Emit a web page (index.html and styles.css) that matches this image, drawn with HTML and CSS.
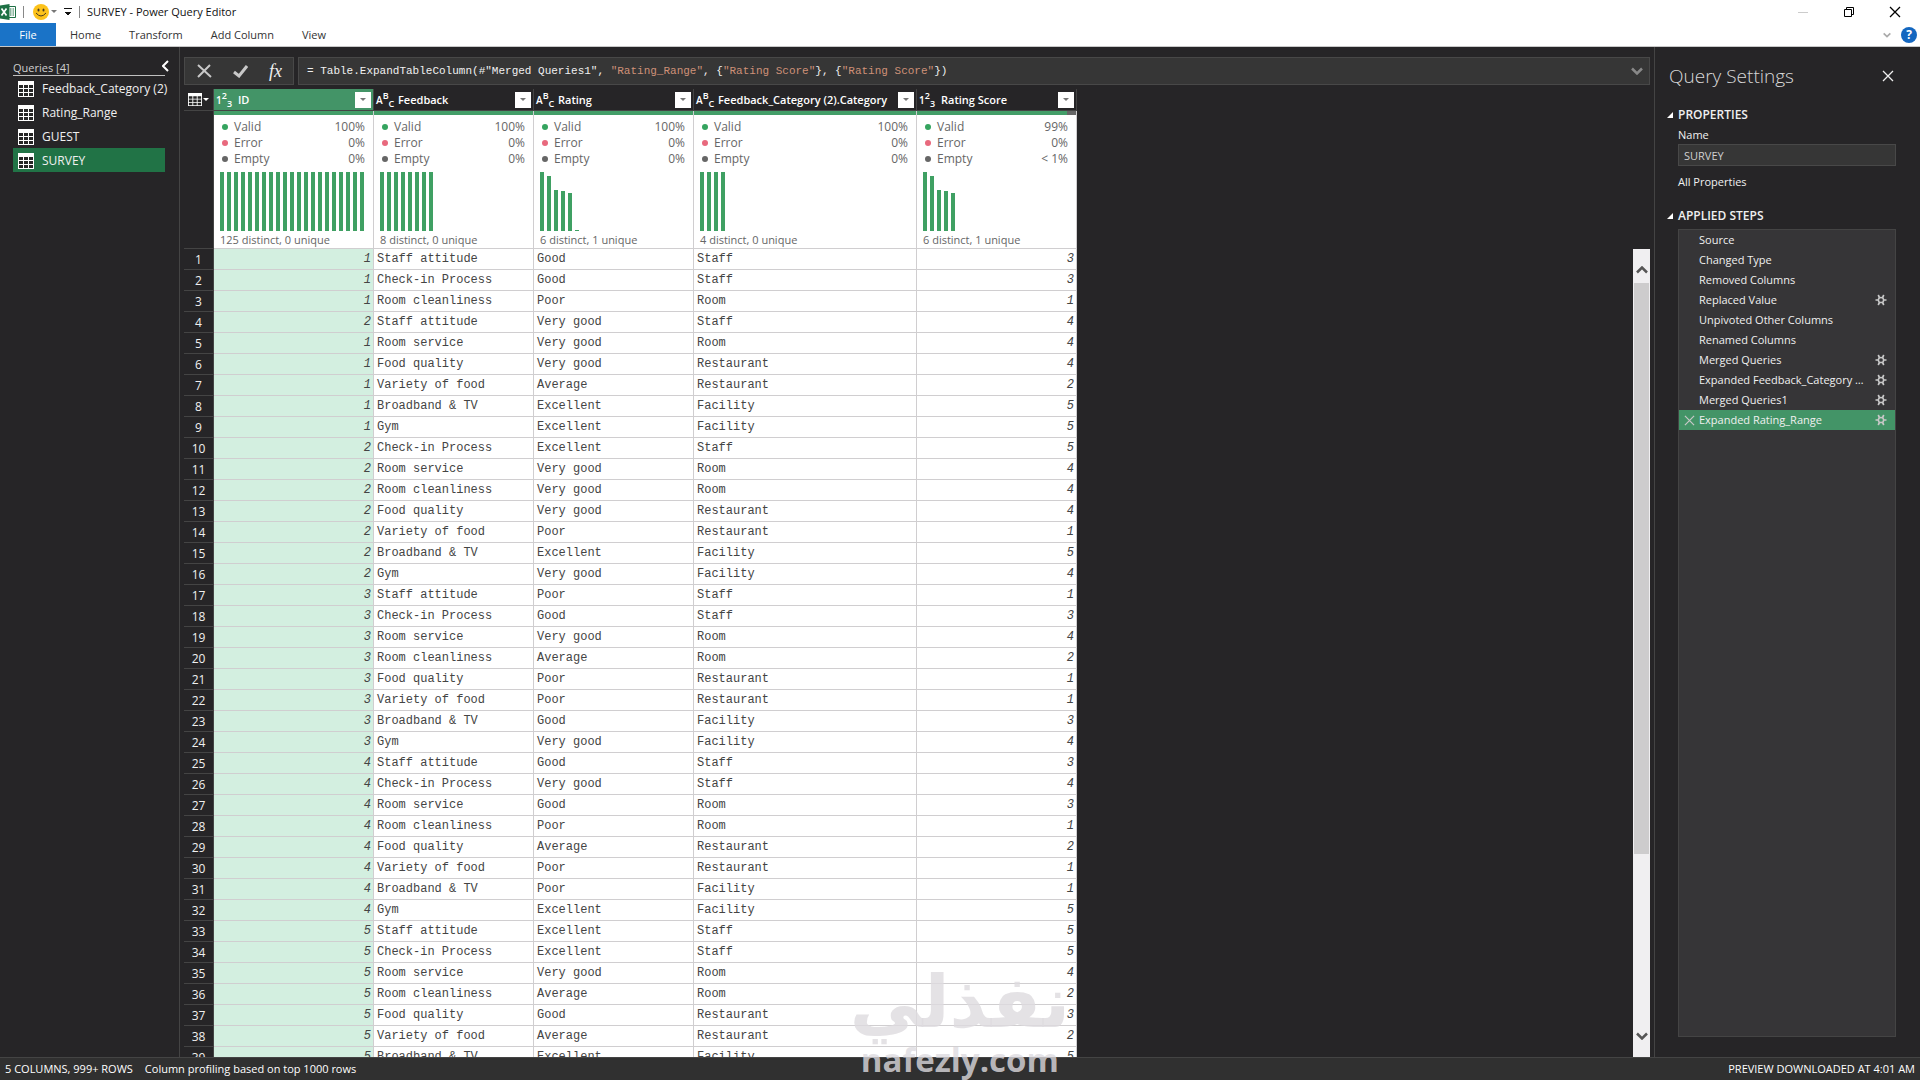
FILE: index.html
```html
<!DOCTYPE html>
<html lang="en">
<head>
    <meta charset="UTF-8">
    <meta name="viewport" content="width=device-width, initial-scale=1.0">
    <title>SURVEY - Power Query Editor</title>
    <link rel="stylesheet" href="styles.css">
</head>
<body>
    <svg class="sprite" width="0" height="0" aria-hidden="true">
        <symbol id="table" viewBox="0 0 16 16">
            <path fill="#fff" d="M0 0h16v16H0z"/>
            <path fill="#262626" d="M1 4h4v3H1zM6 4h4v3H6zM11 4h4v3h-4zM1 8h4v3H1zM6 8h4v3H6zM11 8h4v3h-4zM1 12h4v3H1zM6 12h4v3H6zM11 12h4v3h-4z"/>
        </symbol>
        <symbol id="gear" viewBox="0 0 12 12">
            <circle cx="6" cy="6" r="2.600" fill="none" stroke="currentColor" stroke-width="1.500"/>
            <path stroke="currentColor" stroke-width="1.700" fill="none" d="M.5 6h2.500M9 6h2.500M3.200 1l1.300 2.600M8.800 1L7.500 3.600M3.200 11l1.300-2.600M8.800 11L7.500 8.400"/>
        </symbol>
        <symbol id="cross" viewBox="0 0 12 12">
            <path stroke="currentColor" stroke-width="1.300" fill="none" d="M1 1l10 10M11 1L1 11"/>
        </symbol>
        <symbol id="chevron" viewBox="0 0 12 8">
            <path stroke="currentColor" stroke-width="2.500" fill="none" d="M1 1.500l5 5 5-5"/>
        </symbol>
    </svg>

    <header class="titlebar">
        <svg class="excel" width="16" height="16" viewBox="0 0 16 16">
            <path fill="#fff" stroke="#1e7145" d="M8 2.500h7.500v11H8z"/>
            <path stroke="#1e7145" d="M10 5h4M10 7h4M10 9h4M10 11h4" stroke-dasharray="1.500 1"/>
            <path fill="#1e7145" d="M0 1.500L9.500 0v16L0 14.500z"/>
            <path stroke="#fff" stroke-width="1.700" d="M1.500 4.500l5 7M6.500 4.500l-5 7"/>
        </svg>
        <span class="divider"></span>
        <svg class="smiley" width="16" height="16" viewBox="0 0 16 16">
            <circle cx="8" cy="8" r="8" fill="#fcc21b"/>
            <ellipse cx="5.500" cy="6" rx="1" ry="1.500" fill="#4a3a20"/>
            <ellipse cx="10.500" cy="6" rx="1" ry="1.500" fill="#4a3a20"/>
            <path d="M3 9q5 6 10 0" fill="none" stroke="#4a3a20"/>
        </svg>
        <span class="caret"></span>
        <span class="customize"></span>
        <span class="divider"></span>
        <h1>SURVEY - Power Query Editor</h1>
        <div class="window-buttons">
            <button aria-label="Minimize"><svg width="10" height="10"><path stroke="#ccc" d="M0 5.500h10"/></svg></button>
            <button aria-label="Restore"><svg width="10" height="10" fill="none" stroke="#000"><path d="M.5 2.500h7v7h-7zM2.500 2.500v-2h7v7h-2"/></svg></button>
            <button aria-label="Close"><svg width="12" height="12"><use href="#cross"/></svg></button>
        </div>
    </header>

    <nav class="ribbon">
        <a class="file" href="#">File</a>
        <a href="#">Home</a>
        <a href="#">Transform</a>
        <a href="#">Add Column</a>
        <a href="#">View</a>
        <div class="ribbon-end">
            <button class="collapse-ribbon" aria-label="Collapse the ribbon"><svg width="8" height="6"><use href="#chevron"/></svg></button>
            <button class="help" aria-label="Help">?</button>
        </div>
    </nav>

    <div class="workspace">
        <aside class="queries">
            <div class="queries-head">
                <h2>Queries [4]</h2>
                <button aria-label="Collapse"><svg width="7" height="12" viewBox="0 0 7 12"><path d="M6 1L1 6l5 5" fill="none" stroke="#fff" stroke-width="2"/></svg></button>
            </div>
            <ul>
                <li><a href="#"><svg width="16" height="16"><use href="#table"/></svg>Feedback_Category (2)</a></li>
                <li><a href="#"><svg width="16" height="16"><use href="#table"/></svg>Rating_Range</a></li>
                <li><a href="#"><svg width="16" height="16"><use href="#table"/></svg>GUEST</a></li>
                <li><a class="selected" href="#"><svg width="16" height="16"><use href="#table"/></svg>SURVEY</a></li>
            </ul>
        </aside>

        <main class="editor">
            <div class="formula-bar">
                <div class="formula-buttons">
                    <button aria-label="Cancel"><svg width="15" height="14" viewBox="0 0 15 14"><path d="M1 1l13 12M13 1L1 13" fill="none" stroke="#c8c8c8" stroke-width="2"/></svg></button>
                    <button aria-label="Commit"><svg width="15" height="13" viewBox="0 0 15 13"><path d="M1 7l5 4 8-10" fill="none" stroke="#c8c8c8" stroke-width="3"/></svg></button>
                    <button class="fx" aria-label="Insert step">fx</button>
                </div>
                <div class="formula">
                    <code>= Table.ExpandTableColumn(#"Merged Queries1", <span>"Rating_Range"</span>, {<span>"Rating Score"</span>}, {<span>"Rating Score"</span>})</code>
                    <button aria-label="Expand formula bar"><svg width="12" height="8"><use href="#chevron"/></svg></button>
                </div>
            </div>
            <div class="preview">
                <table>
                    <colgroup>
                        <col class="col-num"><col class="col-std"><col class="col-std"><col class="col-std"><col class="col-wide"><col class="col-std">
                    </colgroup>
                    <thead>
                        <tr id="columnNames">
                            <th class="corner"><button aria-label="Table menu"><svg width="14" height="13" viewBox="0 0 16 16" preserveAspectRatio="none"><use href="#table"/></svg><span class="caret"></span></button></th>
                        </tr>
                        <tr id="columnProfiles"><td class="num"></td></tr>
                    </thead>
                    <tbody id="rows"></tbody>
                </table>
                <div class="scrollbar">
                    <button aria-label="Scroll up"><svg class="flip" width="12" height="8"><use href="#chevron"/></svg></button>
                    <div class="track"><div class="thumb"></div></div>
                    <button aria-label="Scroll down"><svg width="12" height="8"><use href="#chevron"/></svg></button>
                </div>
            </div>
        </main>

        <aside class="settings">
            <div class="settings-head">
                <h2>Query Settings</h2>
                <button aria-label="Close pane"><svg width="12" height="12"><use href="#cross"/></svg></button>
            </div>
            <h3>PROPERTIES</h3>
            <div class="properties">
                <label for="queryName">Name</label>
                <input type="text" id="queryName" value="SURVEY">
                <a href="#">All Properties</a>
            </div>
            <h3>APPLIED STEPS</h3>
            <ol class="steps" id="steps"></ol>
        </aside>
    </div>

    <footer class="statusbar">
        <span>5 COLUMNS, 999+ ROWS</span>
        <span>Column profiling based on top 1000 rows</span>
        <span class="downloaded">PREVIEW DOWNLOADED AT 4:01 AM</span>
    </footer>

    <div class="watermark">
        <span class="watermark-ar" lang="ar" dir="rtl">نفذلي</span>
        <span class="watermark-en">nafezly.com</span>
    </div>

    <script src="script.js"></script>
</body>
</html>
```
FILE: styles.css
```css
* {
    box-sizing: border-box;
}

body {
    display: flex;
    flex-direction: column;
    height: 100vh;
    margin: 0;
    overflow: hidden;
    background-color: #262527;
    color: #f0f0f0;
    font-family: "Open Sans", "Noto Sans", sans-serif;
    font-size: 12px;
    line-height: 16px;
}

h1, h2, h3, ul, ol {
    margin: 0;
    padding: 0;
    font-size: 12px;
    font-weight: 400;
    list-style: none;
}

a {
    color: inherit;
    text-decoration: none;
}

button {
    display: flex;
    align-items: center;
    justify-content: center;
    padding: 0;
    border: none;
    background: none;
    color: inherit;
    font: inherit;
    cursor: pointer;
}

svg {
    display: block;
    flex: none;
}

.sprite {
    position: absolute;
}

.caret {
    border: 3px solid transparent;
    border-top-color: currentColor;
    border-bottom: none;
}

/* Title bar */
.titlebar {
    display: flex;
    flex: none;
    align-items: center;
    height: 23px;
    background-color: #fff;
    color: #111;
}

.titlebar h1 {
    font-size: 11px;
}

.titlebar .divider {
    width: 1px;
    height: 12px;
    margin: 0 7px;
    background-color: #888;
}

.smiley {
    margin-left: 2px;
}

.titlebar .caret {
    margin: 0 7px 0 2px;
    color: #777;
}

.customize {
    width: 8px;
    height: 8px;
    border-top: 1px solid #111;
    background: conic-gradient(from -45deg at 50% 90%, #111 90deg, transparent 0) 0 3px / 8px 4px no-repeat;
}

.window-buttons {
    display: flex;
    margin-left: auto;
    margin-right: 2px;
}

.window-buttons button {
    width: 46px;
    height: 20px;
    color: #000;
}

/* Ribbon tabs */
.ribbon {
    display: flex;
    flex: none;
    align-items: center;
    height: 24px;
    border-bottom: 1px solid #c8c8c8;
    background-color: #fff;
    color: #333;
    font-size: 11px;
}

.ribbon a {
    margin-right: 28px;
    line-height: 23px;
}

.ribbon .file {
    width: 56px;
    margin-right: 14px;
    background-color: #1a73c7;
    color: #fff;
    text-align: center;
}

.ribbon-end {
    display: flex;
    gap: 10px;
    margin-left: auto;
    margin-right: 3px;
}

.collapse-ribbon {
    color: #aaa;
}

.help {
    width: 16px;
    height: 16px;
    border-radius: 50%;
    background-color: #1467c0;
    color: #fff;
    font-size: 12px;
    font-weight: 700;
}

.workspace {
    display: flex;
    flex: 1;
    min-height: 0;
}

/* Queries pane */
.queries {
    flex: none;
    width: 180px;
    padding: 12px 14px 0 13px;
    border-right: 1px solid #444;
}

.queries-head {
    display: flex;
    justify-content: space-between;
    height: 17px;
    border-bottom: 1px solid #c0c0c0;
}

.queries-head h2 {
    color: #d0d0d0;
    font-size: 11px;
    line-height: 18px;
}

.queries-head button {
    width: 0;
    height: 14px;
}

.queries li a {
    display: flex;
    align-items: center;
    gap: 8px;
    height: 24px;
    padding: 1px 0 0 5px;
    white-space: nowrap;
}

.queries li .selected {
    background-color: #217346;
}

/* Formula bar and preview */
.editor {
    display: flex;
    flex: 1;
    flex-direction: column;
    min-width: 0;
    padding: 10px 4px 0;
}

.formula-bar {
    display: flex;
    flex: none;
    gap: 4px;
    height: 28px;
    margin-bottom: 4px;
}

.formula-buttons,
.formula {
    display: flex;
    align-items: center;
    border: 1px solid #484848;
    background-color: #363636;
}

.formula-buttons {
    width: 110px;
    justify-content: space-between;
    padding: 0 11px 0 12px;
}

.fx {
    font-family: "Liberation Serif", serif;
    font-size: 18px;
    font-style: italic;
}

.formula {
    flex: 1;
    justify-content: space-between;
    padding: 0 6px 0 8px;
}

.formula code {
    font-family: "Liberation Mono", monospace;
    font-size: 11px;
    white-space: pre;
}

.formula code span {
    color: #ce9178;
}

.formula button {
    color: #888;
}

.preview {
    display: flex;
    flex: 1;
    align-items: flex-start;
    justify-content: space-between;
    min-height: 0;
    overflow: hidden;
}

table {
    flex: none;
    width: 893px;
    border-spacing: 0;
    table-layout: fixed;
    background-color: #fff;
    color: #444;
}

.col-num {
    width: 30px;
}

.col-std {
    width: 160px;
}

.col-wide {
    width: 223px;
}

th,
td {
    height: 21px;
    padding: 0;
    border-right: 1px solid #d0ced0;
    border-bottom: 1px solid #d0ced0;
}

thead th {
    height: 22px;
    border-color: #444;
    background-color: #262527;
    color: #fff;
    font-size: 11px;
    font-weight: 600;
    text-align: left;
}

thead th.active {
    background-color: #439467;
}

.corner button {
    gap: 1px;
    width: 100%;
}

.column-name {
    display: flex;
    align-items: center;
    padding: 0 2px;
    white-space: nowrap;
}

.type {
    display: flex;
    align-items: center;
    width: 22px;
    height: 18px;
    font-size: 10px;
    line-height: 10px;
}

.type sup,
.type sub {
    font-size: 9px;
    line-height: 10px;
    vertical-align: baseline;
}

.type sup {
    align-self: flex-start;
}

.type sub {
    align-self: flex-end;
}

.column-name button {
    width: 16px;
    height: 16px;
    margin-left: auto;
    background-color: #fff;
    color: #777;
}

.num {
    padding-top: 2px;
    border-color: #444;
    background-color: #262527;
    color: #f0f0f0;
    font-weight: 400;
    text-align: center;
}

#columnProfiles td {
    height: 138px;
    vertical-align: top;
}

.quality-bar {
    display: flex;
    height: 4px;
    margin-bottom: 4px;
    background-color: #439e68;
}

.quality-bar span {
    width: 9px;
    margin-left: auto;
    background-color: #666;
}

.quality,
.histogram,
.distinct {
    margin: 0 6px;
    color: #666;
}

.quality {
    display: flex;
    align-items: center;
    padding: 0 2px;
}

.quality::before {
    width: 6px;
    height: 6px;
    margin-right: 6px;
    border-radius: 50%;
    background-color: #35a45f;
    content: "";
}

.quality.error::before {
    background-color: #e8697d;
}

.quality.empty::before {
    background-color: #666;
}

.quality span:last-child {
    margin-left: auto;
}

.histogram {
    display: flex;
    align-items: flex-end;
    gap: 3px;
    height: 59px;
    margin-top: 5px;
}

.histogram span {
    width: 4px;
    background-color: #3fa063;
}

.distinct {
    font-size: 11px;
    line-height: 17px;
}

#rows td {
    padding: 0 2px 0 3px;
    font-family: "Liberation Mono", monospace;
    line-height: 16px;
}

#rows .number {
    font-style: italic;
    text-align: right;
}

#rows .active {
    background-color: #d3efe0;
}

/* Scroll bar starts under the column profiles */
.scrollbar {
    display: flex;
    flex-direction: column;
    align-self: stretch;
    width: 17px;
    margin-top: 160px;
    background-color: #f0eff1;
    color: #555;
}

.scrollbar button {
    height: 42px;
}

.scrollbar button:first-child {
    height: 34px;
    padding-top: 8px;
}

.flip {
    transform: scaleY(-1);
}

.track {
    flex: 1;
    padding: 0 1px;
}

.thumb {
    height: 78%;
    background-color: #cdcccd;
}

/* Query settings pane */
.settings {
    display: flex;
    flex: none;
    flex-direction: column;
    width: 266px;
    padding: 14px 24px 20px 12px;
    border-left: 1px solid #444;
}

.settings-head {
    display: flex;
    align-items: center;
    justify-content: space-between;
    height: 30px;
    margin-bottom: 16px;
    padding: 0 2px;
}

.settings-head h2 {
    color: #d8d8d8;
    font-size: 19px;
    font-weight: 300;
}

.settings h3 {
    display: flex;
    align-items: center;
    gap: 5px;
    font-weight: 600;
}

.settings h3::before {
    width: 6px;
    height: 6px;
    background-color: #fff;
    clip-path: polygon(100% 0, 100% 100%, 0 100%);
    content: "";
}

.properties {
    margin: 4px 0 18px 11px;
    font-size: 11px;
}

.properties label,
.properties input,
.properties a {
    display: block;
}

.properties input {
    width: 100%;
    height: 22px;
    margin: 1px 0 8px;
    padding: 0 5px;
    border: 1px solid #484848;
    background-color: #363636;
    color: #d0d0d0;
    font: inherit;
}

.steps {
    flex: 1;
    margin: 5px 0 0 11px;
    border: 1px solid #444;
    background-color: #363537;
    font-size: 11px;
}

.steps li {
    display: flex;
    align-items: center;
    height: 20px;
    padding: 0 8px 0 5px;
}

.steps svg {
    color: #c8c8c8;
}

.steps .delete {
    width: 15px;
}

.steps .step-name {
    display: block;
    flex: 1;
    min-width: 0;
    margin-right: 10px;
    overflow: hidden;
    text-align: left;
    text-overflow: ellipsis;
    white-space: nowrap;
}

.steps .selected {
    background-color: #439467;
}

/* Status bar */
.statusbar {
    display: flex;
    flex: none;
    align-items: center;
    gap: 12px;
    height: 23px;
    padding: 0 5px;
    border-top: 1px solid #444;
    background-color: #303030;
    color: #fff;
    font-size: 11px;
}

.downloaded {
    margin-left: auto;
}

.watermark {
    position: absolute;
    right: 850px;
    bottom: 0;
    display: flex;
    flex-direction: column;
    align-items: center;
    color: rgba(221, 219, 223, 0.8);
    font-weight: 700;
    pointer-events: none;
}

.watermark-ar {
    font-family: "DejaVu Sans", sans-serif;
    font-size: 72px;
    line-height: 76px;
}

.watermark-en {
    font-family: "Open Sans", sans-serif;
    font-size: 33px;
    line-height: 40px;
}
```
FILE: script.js
```js
const columns = [
    { name: "ID", type: "123", quality: ["100%", "0%", "0%"], bars: Array(21).fill(59), distinct: "125 distinct, 0 unique", active: true },
    { name: "Feedback", type: "ABC", quality: ["100%", "0%", "0%"], bars: Array(8).fill(59), distinct: "8 distinct, 0 unique" },
    { name: "Rating", type: "ABC", quality: ["100%", "0%", "0%"], bars: [59, 55, 41, 40, 38, 1], distinct: "6 distinct, 1 unique" },
    { name: "Feedback_Category (2).Category", type: "ABC", quality: ["100%", "0%", "0%"], bars: Array(4).fill(59), distinct: "4 distinct, 0 unique" },
    { name: "Rating Score", type: "123", quality: ["99%", "0%", "&lt; 1%"], bars: [59, 55, 41, 40, 38], distinct: "6 distinct, 1 unique", empty: true }
];

const categories = {
    "Staff attitude": "Staff",
    "Check-in Process": "Staff",
    "Room service": "Room",
    "Room cleanliness": "Room",
    "Food quality": "Restaurant",
    "Variety of food": "Restaurant",
    "Broadband & TV": "Facility",
    "Gym": "Facility"
};

const scores = { "Poor": 1, "Average": 2, "Good": 3, "Very good": 4, "Excellent": 5 };

const survey = [
    [1, "Staff attitude", "Good"],
    [1, "Check-in Process", "Good"],
    [1, "Room cleanliness", "Poor"],
    [2, "Staff attitude", "Very good"],
    [1, "Room service", "Very good"],
    [1, "Food quality", "Very good"],
    [1, "Variety of food", "Average"],
    [1, "Broadband & TV", "Excellent"],
    [1, "Gym", "Excellent"],
    [2, "Check-in Process", "Excellent"],
    [2, "Room service", "Very good"],
    [2, "Room cleanliness", "Very good"],
    [2, "Food quality", "Very good"],
    [2, "Variety of food", "Poor"],
    [2, "Broadband & TV", "Excellent"],
    [2, "Gym", "Very good"],
    [3, "Staff attitude", "Poor"],
    [3, "Check-in Process", "Good"],
    [3, "Room service", "Very good"],
    [3, "Room cleanliness", "Average"],
    [3, "Food quality", "Poor"],
    [3, "Variety of food", "Poor"],
    [3, "Broadband & TV", "Good"],
    [3, "Gym", "Very good"],
    [4, "Staff attitude", "Good"],
    [4, "Check-in Process", "Very good"],
    [4, "Room service", "Good"],
    [4, "Room cleanliness", "Poor"],
    [4, "Food quality", "Average"],
    [4, "Variety of food", "Poor"],
    [4, "Broadband & TV", "Poor"],
    [4, "Gym", "Excellent"],
    [5, "Staff attitude", "Excellent"],
    [5, "Check-in Process", "Excellent"],
    [5, "Room service", "Very good"],
    [5, "Room cleanliness", "Average"],
    [5, "Food quality", "Good"],
    [5, "Variety of food", "Average"],
    [5, "Broadband & TV", "Excellent"]
];

const steps = [
    ["Source"],
    ["Changed Type"],
    ["Removed Columns"],
    ["Replaced Value", true],
    ["Unpivoted Other Columns"],
    ["Renamed Columns"],
    ["Merged Queries", true],
    ["Expanded Feedback_Category (2)", true],
    ["Merged Queries1", true],
    ["Expanded Rating_Range", true]
];

const add = (id, html) => document.getElementById(id).insertAdjacentHTML("beforeend", html);

columns.forEach(col => {
    add("columnNames", `<th class="${col.active ? "active" : ""}"><div class="column-name">
        <span class="type">${col.type[0]}<sup>${col.type[1]}</sup><sub>${col.type[2]}</sub></span>${col.name}
        <button aria-label="Filter ${col.name}"><span class="caret"></span></button></div></th>`);
    add("columnProfiles", `<td>
        <div class="quality-bar">${col.empty ? "<span></span>" : ""}</div>
        <div class="quality"><span>Valid</span><span>${col.quality[0]}</span></div>
        <div class="quality error"><span>Error</span><span>${col.quality[1]}</span></div>
        <div class="quality empty"><span>Empty</span><span>${col.quality[2]}</span></div>
        <div class="histogram">${col.bars.map(h => `<span style="height: ${h}px"></span>`).join("")}</div>
        <div class="distinct">${col.distinct}</div></td>`);
});

survey.forEach(([id, feedback, rating], i) => {
    add("rows", `<tr><th class="num">${i + 1}</th><td class="number active">${id}</td>
        <td>${feedback.replace("&", "&amp;")}</td><td>${rating}</td>
        <td>${categories[feedback]}</td><td class="number">${scores[rating]}</td></tr>`);
});

steps.forEach(([name, gear], i) => {
    const selected = i === steps.length - 1;
    add("steps", `<li class="${selected ? "selected" : ""}">
        <span class="delete">${selected ? '<svg width="11" height="11"><use href="#cross"/></svg>' : ""}</span>
        <button class="step-name">${name}</button>
        ${gear ? `<button aria-label="Edit ${name}"><svg width="12" height="12"><use href="#gear"/></svg></button>` : ""}</li>`);
});
```
